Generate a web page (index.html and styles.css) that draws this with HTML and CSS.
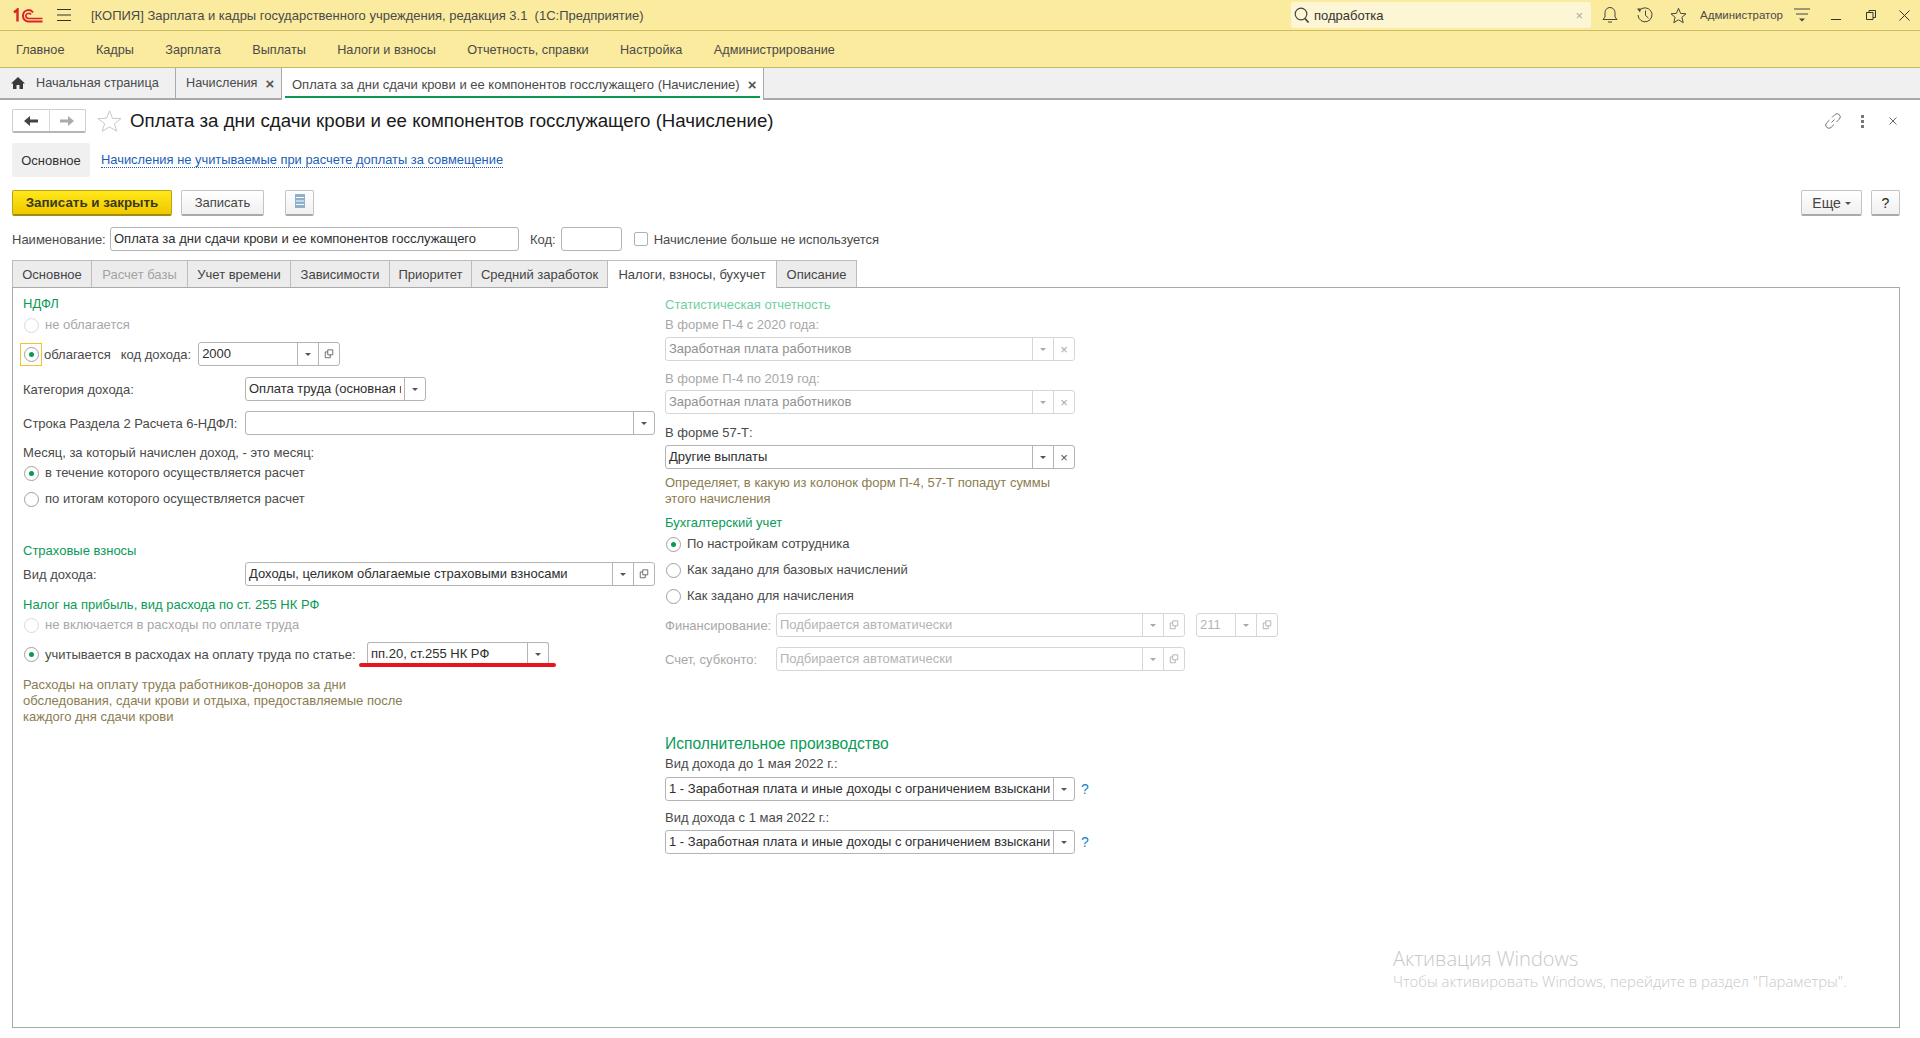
FILE: index.html
```html
<!DOCTYPE html>
<html lang="ru">

<head>
  <meta charset="UTF-8" />
  <title>Оплата за дни сдачи крови и ее компонентов госслужащего (Начисление)</title>
  <link rel="stylesheet" href="styles.css">
</head>

<body>
  <svg class="sprite" aria-hidden="true">
    <symbol id="open" viewBox="0 0 12 12">
      <path d="M4.500 1h6v6h-6zM4.500 3.500H1.500V10.500h6V7" fill="none" stroke="currentColor" />
    </symbol>
  </svg>

  <!-- top bar -->
  <header class="top-bar">
    <svg class="logo" width="30" height="15" viewBox="0 0 30 15">
      <path d="M1 4.500 4.500 1.500V13.500" fill="none" stroke="#d9232a" stroke-width="2.400" />
      <path d="M20 4.500A5.500 5.500 0 0 0 10 7.500 5.500 5.500 0 0 0 15 13.500H29.500" fill="none" stroke="#d9232a" stroke-width="2" />
      <path d="M18 6.500A3 3 0 0 0 12.800 7.500 3 3 0 0 0 15.500 10.500H29.500" fill="none" stroke="#d9232a" stroke-width="1.600" />
    </svg>
    <svg class="burger" width="14" height="12" viewBox="0 0 14 12">
      <path d="M0 .500h14M0 6h14M0 11.500h14" stroke="#333" />
    </svg>
    <span class="app-title">[КОПИЯ] Зарплата и кадры государственного учреждения, редакция 3.1&nbsp; (1С:Предприятие)</span>
    <div class="search">
      <svg width="16" height="17" viewBox="0 0 16 17">
        <circle cx="7" cy="7" r="5.800" fill="none" stroke="#444" stroke-width="1.200" />
        <path d="M11 11.500 14.500 15.500" stroke="#444" stroke-width="1.800" />
      </svg>
      <span class="search-text">подработка</span>
      <span class="search-clear">×</span>
    </div>
    <svg class="bar-icon bell" width="16" height="18" viewBox="0 0 16 18">
      <path d="M1 13.500h14L13 11V6.500A5 5 0 0 0 3 6.500V11zM6 16h4" fill="none" stroke="#444" />
    </svg>
    <svg class="bar-icon history" width="18" height="18" viewBox="0 0 18 18">
      <path d="M3.500 4.500A7 7 0 1 1 2 9M9.500 4.500V9.500L12.500 12" fill="none" stroke="#444" />
      <path d="M1 2.500 5 2.500 4 6.500z" fill="#444" />
    </svg>
    <svg class="bar-icon star-small" width="17" height="17" viewBox="0 0 17 17">
      <path d="M8.500 1.300 10.600 6.400 16 6.800 11.900 10.300 13.200 15.700 8.500 12.800 3.800 15.700 5.100 10.300 1 6.800 6.400 6.400z" fill="none" stroke="#444" />
    </svg>
    <span class="user-name">Администратор</span>
    <svg class="bar-icon settings" width="16" height="14" viewBox="0 0 16 14">
      <path d="M0 1h16M2 6h12" stroke="#444" />
      <path d="M5 10.500h6L8 13.500z" fill="#444" />
    </svg>
    <svg class="bar-icon minimize" width="10" height="10" viewBox="0 0 10 10">
      <path d="M0 9.500h10" stroke="#333" />
    </svg>
    <svg class="bar-icon restore" width="10" height="10" viewBox="0 0 10 10">
      <path d="M.500 2.500h6.500v7H.500zM3 2.500V.500h6.500v7H7" fill="none" stroke="#333" />
    </svg>
    <svg class="bar-icon close-app" width="11" height="11" viewBox="0 0 11 11">
      <path d="M.500.500l10 10M10.500.500l-10 10" stroke="#333" />
    </svg>
  </header>

  <nav class="menu-bar">
    <span>Главное</span>
    <span>Кадры</span>
    <span>Зарплата</span>
    <span>Выплаты</span>
    <span>Налоги и взносы</span>
    <span>Отчетность, справки</span>
    <span>Настройка</span>
    <span>Администрирование</span>
  </nav>

  <div class="tab-bar">
    <div class="page-tab home-tab">
      <svg width="14" height="12" viewBox="0 0 14 12">
        <path d="M7 0 14 6.500H12V12H8.500V8h-3v4H2V6.500H0z" fill="#3a3a3a" />
      </svg>
      <span>Начальная страница</span>
    </div>
    <div class="page-tab list-tab">
      <span>Начисления</span>
      <span class="tab-close">×</span>
    </div>
    <div class="page-tab active-tab">
      <span>Оплата за дни сдачи крови и ее компонентов госслужащего (Начисление)</span>
      <span class="tab-close">×</span>
    </div>
  </div>

  <main class="form">
    <div class="title-row">
      <div class="nav-buttons">
        <span class="nav-button">
          <svg width="14" height="10" viewBox="0 0 14 10"><path d="M0 5 6 0V3.500H14V6.500H6V10z" fill="#444" /></svg>
        </span>
        <span class="nav-button">
          <svg width="14" height="10" viewBox="0 0 14 10"><path d="M14 5 8 0V3.500H0V6.500H8V10z" fill="#aaa" /></svg>
        </span>
      </div>
      <svg class="big-star" width="25" height="22" viewBox="0 0 25 22">
        <path d="M12.500 .800 15.500 8.300 24 8.600 17.400 13.800 19.800 21.200 12.500 17 5.200 21.200 7.600 13.800 1 8.600 9.500 8.300z" fill="none" stroke="#c8c8c8" />
      </svg>
      <h1 class="form-title">Оплата за дни сдачи крови и ее компонентов госслужащего (Начисление)</h1>
      <div class="title-icons">
        <svg width="16" height="16" viewBox="0 0 16 16">
          <path d="M6.500 9.500 9.500 6.500M7 4.500 9.800 1.700A3 3 0 0 1 14.300 6.200L11.500 9M9 11.500 6.200 14.300A3 3 0 0 1 1.700 9.800L4.500 7" fill="none" stroke="#777" />
        </svg>
        <span class="dots"></span>
        <svg width="8" height="8" viewBox="0 0 8 8">
          <path d="M.500.500l7 7M7.500.500l-7 7" stroke="#666" />
        </svg>
      </div>
    </div>

    <div class="section-links">
      <span class="section-current">Основное</span>
      <a class="section-link">Начисления не учитываемые при расчете доплаты за совмещение</a>
    </div>

    <div class="command-bar">
      <button class="btn btn-primary">Записать и закрыть</button>
      <button class="btn btn-save">Записать</button>
      <button class="btn btn-icon">
        <svg width="10" height="14" viewBox="0 0 10 14">
          <path d="M0 0h10v14H0z" fill="#8fb0c8" />
          <path d="M1 3.500h8M1 7h8M1 10.500h8" stroke="#f4f8fb" />
        </svg>
      </button>
      <span class="spacer"></span>
      <button class="btn btn-more">Еще <i class="arrow"></i></button>
      <button class="btn btn-help">?</button>
    </div>

    <div class="name-row">
      <span class="name-label">Наименование:</span>
      <div class="field name-field"><span class="field-text">Оплата за дни сдачи крови и ее компонентов госслужащего</span></div>
      <span class="code-label">Код:</span>
      <div class="field code-field"></div>
      <span class="checkbox"></span>
      <span>Начисление больше не используется</span>
    </div>

    <div class="tabs">
      <span class="tab">Основное</span>
      <span class="tab tab-off">Расчет базы</span>
      <span class="tab">Учет времени</span>
      <span class="tab">Зависимости</span>
      <span class="tab">Приоритет</span>
      <span class="tab">Средний заработок</span>
      <span class="tab tab-active">Налоги, взносы, бухучет</span>
      <span class="tab">Описание</span>
    </div>

    <div class="panel">
      <div class="col-left">
        <div class="line head mt-8">НДФЛ</div>
        <div class="line muted mt-5"><i class="radio radio-off"></i>не облагается</div>
        <div class="row mt-9">
          <span class="radio-focus"><i class="radio radio-on"></i></span>
          <span>облагается</span>
          <span class="income-label">код дохода:</span>
          <div class="field income-field">
            <span class="field-text">2000</span>
            <span class="field-btn"><i class="arrow"></i></span>
            <span class="field-btn"><svg width="10" height="10"><use href="#open" /></svg></span>
          </div>
        </div>
        <div class="row mt-11">
          <span class="row-label">Категория дохода:</span>
          <div class="field category-field">
            <span class="field-text">Оплата труда (основная налоговая база)</span>
            <span class="field-btn"><i class="arrow"></i></span>
          </div>
        </div>
        <div class="row mt-10">
          <span class="row-label">Строка Раздела 2 Расчета 6-НДФЛ:</span>
          <div class="field wide-field">
            <span class="field-text"></span>
            <span class="field-btn"><i class="arrow"></i></span>
          </div>
        </div>
        <div class="line mt-10">Месяц, за который начислен доход, - это месяц:</div>
        <div class="line mt-4"><i class="radio radio-on"></i>в течение которого осуществляется расчет</div>
        <div class="line mt-10"><i class="radio"></i>по итогам которого осуществляется расчет</div>

        <div class="line head mt-36">Страховые взносы</div>
        <div class="row mt-3">
          <span class="row-label">Вид дохода:</span>
          <div class="field wide-field">
            <span class="field-text">Доходы, целиком облагаемые страховыми взносами</span>
            <span class="field-btn"><i class="arrow"></i></span>
            <span class="field-btn"><svg width="10" height="10"><use href="#open" /></svg></span>
          </div>
        </div>
        <div class="line head mt-11">Налог на прибыль, вид расхода по ст. 255 НК РФ</div>
        <div class="line muted mt-4"><i class="radio radio-off"></i>не включается в расходы по оплате труда</div>
        <div class="row article-row mt-9">
          <i class="radio radio-on"></i>
          <span class="article-label">учитывается в расходах на оплату труда по статье:</span>
          <div class="field article-field">
            <span class="field-text">пп.20, ст.255 НК РФ</span>
            <span class="field-btn"><i class="arrow"></i></span>
          </div>
          <span class="red-mark"></span>
        </div>
        <p class="hint hint-left mt-11">Расходы на оплату труда работников-доноров за дни обследования, сдачи крови и отдыха, предоставляемые после каждого дня сдачи крови</p>
      </div>

      <div class="col-right">
        <div class="line head head-off mt-9">Статистическая отчетность</div>
        <div class="line muted mt-4">В форме П-4 с 2020 года:</div>
        <div class="field stat-field field-off mt-4">
          <span class="field-text">Заработная плата работников</span>
          <span class="field-btn"><i class="arrow"></i></span>
          <span class="field-btn">×</span>
        </div>
        <div class="line muted mt-10">В форме П-4 по 2019 год:</div>
        <div class="field stat-field field-off mt-3">
          <span class="field-text">Заработная плата работников</span>
          <span class="field-btn"><i class="arrow"></i></span>
          <span class="field-btn">×</span>
        </div>
        <div class="line mt-11">В форме 57-Т:</div>
        <div class="field stat-field mt-4">
          <span class="field-text">Другие выплаты</span>
          <span class="field-btn"><i class="arrow"></i></span>
          <span class="field-btn">×</span>
        </div>
        <p class="hint hint-right mt-6">Определяет, в какую из колонок форм П-4, 57-Т попадут суммы этого начисления</p>
        <div class="line head mt-8">Бухгалтерский учет</div>
        <div class="line mt-5"><i class="radio radio-on"></i>По настройкам сотрудника</div>
        <div class="line mt-10"><i class="radio"></i>Как задано для базовых начислений</div>
        <div class="line mt-10"><i class="radio"></i>Как задано для начисления</div>
        <div class="row muted mt-9">
          <span class="fin-label">Финансирование:</span>
          <div class="field auto-field field-off">
            <span class="field-text">Подбирается автоматически</span>
            <span class="field-btn"><i class="arrow"></i></span>
            <span class="field-btn"><svg width="10" height="10"><use href="#open" /></svg></span>
          </div>
          <div class="field code-211 field-off">
            <span class="field-text">211</span>
            <span class="field-btn"><i class="arrow"></i></span>
            <span class="field-btn"><svg width="10" height="10"><use href="#open" /></svg></span>
          </div>
        </div>
        <div class="row muted mt-10">
          <span class="fin-label">Счет, субконто:</span>
          <div class="field auto-field field-off">
            <span class="field-text">Подбирается автоматически</span>
            <span class="field-btn"><i class="arrow"></i></span>
            <span class="field-btn"><svg width="10" height="10"><use href="#open" /></svg></span>
          </div>
        </div>
        <div class="line head big-head mt-63">Исполнительное производство</div>
        <div class="line mt-2">Вид дохода до 1 мая 2022 г.:</div>
        <div class="row mt-5">
          <div class="field stat-field">
            <span class="field-text">1 - Заработная плата и иные доходы с ограничением взыскания</span>
            <span class="field-btn"><i class="arrow"></i></span>
          </div>
          <span class="help-mark">?</span>
        </div>
        <div class="line mt-9">Вид дохода с 1 мая 2022 г.:</div>
        <div class="row mt-4">
          <div class="field stat-field">
            <span class="field-text">1 - Заработная плата и иные доходы с ограничением взыскания</span>
            <span class="field-btn"><i class="arrow"></i></span>
          </div>
          <span class="help-mark">?</span>
        </div>
      </div>

      <div class="watermark">
        <div class="watermark-title">Активация Windows</div>
        <div class="watermark-text">Чтобы активировать Windows, перейдите в раздел "Параметры".</div>
      </div>
    </div>
  </main>
</body>

</html>
```

FILE: styles.css
```css
* {
  box-sizing: border-box;
}

body {
  margin: 0;
  height: 100vh;
  display: flex;
  flex-direction: column;
  overflow: hidden;
  font-family: "Liberation Sans", Arial, sans-serif;
  font-size: 13px;
  color: #4a4a4a;
  background: #ffffff;
}

.sprite {
  display: none;
}

/* top */
.top-bar {
  height: 31px;
  flex: none;
  display: flex;
  align-items: center;
  background: #fbeb9e;
  border-bottom: 1px solid #cdbc62;
}

.logo {
  margin-left: 13px;
}

.burger {
  margin-left: 14px;
}

.app-title {
  margin-left: 20px;
  color: #4a4a4a;
}

.search {
  margin-left: auto;
  width: 300px;
  height: 26px;
  display: flex;
  align-items: center;
  padding: 0 8px 0 3px;
  background: #fdf6d4;
  border-radius: 2px;
}

.search-text {
  margin-left: 4px;
  flex: 1;
  color: #333;
}

.search-clear {
  color: #aaa;
  font-size: 13px;
}

.bar-icon {
  flex: none;
}

.bell {
  margin-left: 11px;
}

.history {
  margin-left: 18px;
}

.star-small {
  margin-left: 16px;
}

.user-name {
  width: 81px;
  flex: none;
  margin-left: 13px;
  font-size: 11.500px;
  white-space: nowrap;
}

.settings {
  margin-left: 13px;
}

.minimize {
  margin-left: 21px;
}

.restore {
  margin-left: 25px;
}

.close-app {
  margin: 0 10px 0 23px;
}

.menu-bar {
  height: 37px;
  flex: none;
  display: flex;
  align-items: center;
  gap: 31.400px;
  padding: 1px 0 0 16px;
  font-size: 12.700px;
  background: #fbeb9e;
  border-bottom: 1px solid #c9b962;
}

.tab-bar {
  height: 32px;
  flex: none;
  display: flex;
  background: #f0f0f0;
  border-bottom: 2px solid #a9a9a9;
}

.page-tab {
  display: flex;
  align-items: center;
  border-right: 1px solid #a9a9a9;
}

.home-tab {
  width: 176px;
  padding-left: 11px;
  gap: 11px;
  font-size: 12.700px;
}

.list-tab {
  width: 106px;
  padding-left: 10px;
  font-size: 12.700px;
}

.active-tab {
  width: 482px;
  height: 32px;
  padding-left: 10px;
  background: #ffffff;
  position: relative;
}

.active-tab::after {
  content: "";
  position: absolute;
  left: 3px;
  right: 3px;
  bottom: 2px;
  height: 2px;
  background: #0a9a50;
}

.tab-close {
  margin-left: 8px;
  font-size: 15px;
  font-weight: bold;
  color: #555;
}

/* form */
.form {
  flex: 1;
  min-height: 0;
  display: flex;
  flex-direction: column;
  padding: 8px 20px 10px 12px;
  color: #4a4a4a;
}

.title-row {
  height: 26px;
  display: flex;
  align-items: center;
}

.nav-buttons {
  width: 74px;
  height: 24px;
  display: flex;
  border: 1px solid #cfcfcf;
  border-bottom: 2px solid #b5b5b5;
  border-radius: 2px;
}

.nav-button {
  flex: 1;
  display: flex;
  align-items: center;
  justify-content: center;
}

.nav-button + .nav-button {
  border-left: 1px solid #d8d8d8;
}

.big-star {
  margin-left: 11px;
}

.form-title {
  margin: 0 0 0 8px;
  font-size: 18.700px;
  font-weight: normal;
  color: #1a1a1a;
}

.title-icons {
  margin-left: auto;
  display: flex;
  align-items: center;
  padding-right: 3px;
}

.dots {
  width: 3px;
  height: 3px;
  margin: 0 25px 0 20px;
  background: #777;
  box-shadow: 0 -5px 0 #777, 0 5px 0 #777;
}

.section-links {
  height: 34px;
  margin-top: 9px;
  display: flex;
  align-items: center;
}

.section-current {
  width: 78px;
  height: 34px;
  display: flex;
  align-items: center;
  justify-content: center;
  background: #f0f0f0;
  border-radius: 2px;
  color: #333;
}

.section-link {
  margin-left: 11px;
  font-size: 12.900px;
  color: #1b5fb5;
  border-bottom: 1px dotted #1b5fb5;
}

.command-bar {
  height: 26px;
  margin-top: 13px;
  display: flex;
}

.btn {
  height: 26px;
  padding: 0;
  font: inherit;
  color: #444;
  background: linear-gradient(#ffffff, #f0f0f0);
  border: 1px solid #c4c4c4;
  border-bottom: 2px solid #aaaaaa;
  border-radius: 2px;
}

.btn-primary {
  width: 160px;
  font-size: 13.400px;
  font-weight: bold;
  color: #3a3a1a;
  background: linear-gradient(#ffe81a, #f0c800);
  border-color: #b9a21a;
  border-bottom-color: #a08c10;
}

.btn-save {
  width: 83px;
  margin-left: 9px;
}

.btn-icon {
  width: 29px;
  margin-left: 21px;
}

.spacer {
  flex: 1;
}

.btn-more {
  width: 61px;
  font-size: 14px;
}

.btn-help {
  width: 29px;
  margin-left: 9px;
  font-size: 14px;
  color: #222;
}

.arrow {
  display: inline-block;
  width: 0;
  height: 0;
  vertical-align: middle;
  border-left: 3px solid transparent;
  border-right: 3px solid transparent;
  border-top: 3px solid #555;
}

.name-row {
  height: 24px;
  margin-top: 11px;
  display: flex;
  align-items: center;
}

.field {
  height: 24px;
  display: flex;
  align-items: stretch;
  background: #ffffff;
  border: 1px solid #b4b4b4;
  border-radius: 3px;
  color: #2e2e2e;
}

.field-text {
  flex: 1;
  min-width: 0;
  margin-right: 3px;
  padding-left: 3px;
  line-height: 22px;
  white-space: nowrap;
  overflow: hidden;
}

.field-btn {
  width: 21px;
  flex: none;
  display: flex;
  align-items: center;
  justify-content: center;
  border-left: 1px solid #b4b4b4;
  color: #555;
}

.name-label {
  width: 98px;
  flex: none;
}

.name-field {
  width: 409px;
}

.code-label {
  margin-left: 11px;
}

.code-field {
  width: 61px;
  margin-left: 5px;
}

.checkbox {
  width: 14px;
  height: 14px;
  margin: 0 6px 0 12px;
  background: #ffffff;
  border: 1px solid #b0b0b0;
  border-radius: 2px;
}

.tabs {
  height: 27px;
  margin-top: 9px;
  display: flex;
  position: relative;
  z-index: 1;
}

.tab {
  display: flex;
  flex: none;
  align-items: center;
  justify-content: center;
  background: #ececec;
  border: 1px solid #bdbdbd;
  border-bottom: none;
  border-left: none;
  color: #444;
}

.tab:nth-child(1) { width: 80px; border-left: 1px solid #bdbdbd; }
.tab:nth-child(2) { width: 96px; }
.tab:nth-child(3) { width: 103px; }
.tab:nth-child(4) { width: 99px; }
.tab:nth-child(5) { width: 82px; }
.tab:nth-child(6) { width: 136px; }
.tab:nth-child(7) { width: 169px; }
.tab:nth-child(8) { width: 80px; }

.tab-off {
  color: #a3a3a3;
}

.tab-active {
  height: 28px;
  background: #ffffff;
}

.panel {
  flex: 1;
  min-height: 0;
  display: flex;
  position: relative;
  padding-left: 10px;
  border: 1px solid #a9a9a9;
}

.col-left {
  width: 642px;
}

.col-right {
  width: 620px;
}

.line {
  min-height: 16px;
  display: flex;
  align-items: center;
  line-height: 16px;
}

.row {
  display: flex;
  align-items: center;
  min-height: 24px;
}

.head {
  color: #0a9a56;
}

.head-off {
  color: #6fd0a0;
}

.big-head {
  min-height: 20px;
  font-size: 15.600px;
}

.muted {
  color: #a8a8a8;
}

.hint {
  margin-bottom: 0;
  line-height: 16px;
  color: #8c7c50;
}

.hint-left {
  width: 390px;
}

.hint-right {
  width: 400px;
}

.radio {
  width: 15px;
  height: 15px;
  flex: none;
  margin: 0 6px 0 1px;
  position: relative;
  background: #ffffff;
  border: 1px solid #a0a0a0;
  border-radius: 50%;
}

.radio-off {
  border-color: #dadada;
}

.radio-on::after {
  content: "";
  position: absolute;
  left: 4px;
  top: 4px;
  width: 5px;
  height: 5px;
  border-radius: 50%;
  background: #0a9a50;
}

.radio-focus {
  width: 22px;
  height: 23px;
  margin: 0 2px 0 -3px;
  display: flex;
  align-items: center;
  justify-content: center;
  border: 1px solid #f2c230;
}

.radio-focus .radio {
  margin: 0;
}

.income-label {
  margin-left: 10px;
}

.income-field {
  width: 142px;
  margin-left: 7px;
}

.row-label {
  width: 222px;
  flex: none;
}

.category-field {
  width: 181px;
}

.wide-field {
  width: 410px;
}

.article-row {
  position: relative;
}

.article-label {
  width: 322px;
  flex: none;
}

.article-field {
  width: 182px;
  border-bottom: none;
}

.red-mark {
  position: absolute;
  left: 336px;
  top: 21px;
  width: 197px;
  height: 4px;
  border-radius: 2px;
  background: #e8141e;
}

.stat-field {
  width: 410px;
}

.field-off {
  color: #909090;
  border-color: #d6d6d6;
}

.field-off .field-btn {
  border-color: #d6d6d6;
  color: #a8a8a8;
}

.field-off .arrow {
  border-top-color: #a8a8a8;
}

.auto-field .field-text,
.code-211 .field-text {
  color: #b4b4b4;
}

.fin-label {
  width: 111px;
  flex: none;
}

.auto-field {
  width: 409px;
}

.code-211 {
  width: 82px;
  margin-left: 11px;
}

.help-mark {
  margin-left: 6px;
  font-size: 14px;
  color: #1b7fc4;
}

.watermark {
  position: absolute;
  left: 1380px;
  top: 657px;
  color: #c8c8c8;
  font-family: "Open Sans", sans-serif;
}

.watermark-title {
  font-size: 20px;
  font-weight: 300;
  line-height: 27px;
}

.watermark-text {
  font-size: 14.900px;
  font-weight: 300;
  line-height: 18px;
}

.mt-2 { margin-top: 2px; }
.mt-3 { margin-top: 3px; }
.mt-4 { margin-top: 4px; }
.mt-5 { margin-top: 5px; }
.mt-6 { margin-top: 6px; }
.mt-8 { margin-top: 8px; }
.mt-9 { margin-top: 9px; }
.mt-10 { margin-top: 10px; }
.mt-11 { margin-top: 11px; }
.mt-36 { margin-top: 36px; }
.mt-63 { margin-top: 63px; }
```
